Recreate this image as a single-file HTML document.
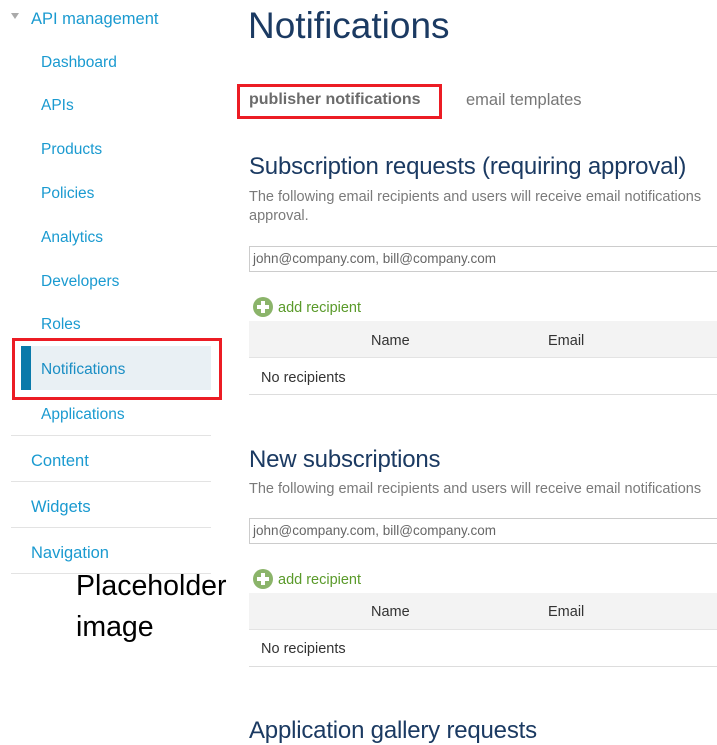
<!DOCTYPE html>
<html><head><meta charset="utf-8"><style>
body{margin:0;width:717px;height:743px;overflow:hidden;background:#fff;font-family:"Liberation Sans",sans-serif;position:relative}
.a{position:absolute;white-space:nowrap}
.nav{color:#1a9ad0;font-size:15.5px;line-height:20px}
.sep{position:absolute;left:11px;width:200px;height:1px;background:#e3e3e3}
.h2{color:#1b3a62;font-size:24px;line-height:28px;letter-spacing:-0.2px}
.desc{color:#7a7a7a;font-size:14.5px;line-height:18px}
.inp{position:absolute;left:249px;width:480px;height:26px;border:1px solid #ccc;box-sizing:border-box;color:#666;font-size:13.5px;line-height:24px;padding-left:3px}
.add{color:#5a9a2a;font-size:14.5px;line-height:18px}
.plus{position:absolute;width:20px;height:20px;border-radius:50%;background:#8bb46a}
.plus:before{content:"";position:absolute;left:4px;top:8px;width:12px;height:4px;background:#fff}
.plus:after{content:"";position:absolute;left:8px;top:4px;width:4px;height:12px;background:#fff}
.th{position:absolute;left:249px;width:468px;height:36px;background:#f3f3f3;border-bottom:1px solid #e3e3e3}
.tx{color:#333;font-size:14.5px;line-height:18px}
.line{position:absolute;left:249px;width:468px;height:1px;background:#ddd}
</style></head><body>
<div class="a" style="left:11px;top:13px;width:0;height:0;border-left:4px solid transparent;border-right:4px solid transparent;border-top:6px solid #aaa"></div>
<div class="a nav" style="left:31px;top:9px;font-size:16.5px">API management</div>
<div class="a nav" style="left:41px;top:53px">Dashboard</div>
<div class="a nav" style="left:41px;top:96px">APIs</div>
<div class="a nav" style="left:41px;top:140px">Products</div>
<div class="a nav" style="left:41px;top:184px">Policies</div>
<div class="a nav" style="left:41px;top:228px">Analytics</div>
<div class="a nav" style="left:41px;top:272px">Developers</div>
<div class="a nav" style="left:41px;top:315px">Roles</div>
<div class="a" style="left:12px;top:338px;width:210px;height:62px;border:3px solid #ec1c24;box-sizing:border-box"></div>
<div class="a" style="left:21px;top:346px;width:190px;height:44px;background:#e9f0f4"></div>
<div class="a" style="left:21px;top:346px;width:10px;height:44px;background:#0a7aaa"></div>
<div class="a nav" style="left:41px;top:360px;color:#1a8ec4">Notifications</div>
<div class="a nav" style="left:41px;top:405px">Applications</div>
<div class="sep" style="top:435px"></div>
<div class="a nav" style="left:31px;top:451px;font-size:16.5px">Content</div>
<div class="sep" style="top:481px"></div>
<div class="a nav" style="left:31px;top:497px;font-size:16.5px">Widgets</div>
<div class="sep" style="top:527px"></div>
<div class="a nav" style="left:31px;top:543px;font-size:16.5px">Navigation</div>
<div class="sep" style="top:573px"></div>
<div class="a" style="left:76px;top:569px;font-size:28.5px;line-height:34px;color:#000">Placeholder</div>
<div class="a" style="left:76px;top:610px;font-size:28.5px;line-height:34px;color:#000">image</div>

<div class="a" style="left:248px;top:3px;font-size:37px;line-height:46px;color:#1b3a62">Notifications</div>
<div class="a" style="left:237px;top:84px;width:205px;height:35px;border:3px solid #ec1c24;box-sizing:border-box"></div>
<div class="a" style="left:249px;top:90px;font-size:16px;line-height:20px;font-weight:bold;color:#6b6b6b">publisher notifications</div>
<div class="a" style="left:466px;top:90px;font-size:16.5px;line-height:20px;color:#777">email templates</div>

<div class="a h2" style="left:249px;top:153px">Subscription requests (requiring approval)</div>
<div class="a desc" style="left:249px;top:188px">The following email recipients and users will receive email notifications</div>
<div class="a desc" style="left:249px;top:207px">approval.</div>
<div class="inp" style="top:246px">john@company.com, bill@company.com</div>
<div class="plus" style="left:253px;top:297px"></div>
<div class="a add" style="left:278px;top:299px">add recipient</div>
<div class="th" style="top:321px"></div>
<div class="a tx" style="left:371px;top:332px">Name</div>
<div class="a tx" style="left:548px;top:332px">Email</div>
<div class="a tx" style="left:261px;top:369px">No recipients</div>
<div class="line" style="top:394px"></div>

<div class="a h2" style="left:249px;top:446px">New subscriptions</div>
<div class="a desc" style="left:249px;top:480px">The following email recipients and users will receive email notifications</div>
<div class="inp" style="top:518px">john@company.com, bill@company.com</div>
<div class="plus" style="left:253px;top:569px"></div>
<div class="a add" style="left:278px;top:571px">add recipient</div>
<div class="th" style="top:593px"></div>
<div class="a tx" style="left:371px;top:603px">Name</div>
<div class="a tx" style="left:548px;top:603px">Email</div>
<div class="a tx" style="left:261px;top:640px">No recipients</div>
<div class="line" style="top:666px"></div>

<div class="a h2" style="left:249px;top:717px">Application gallery requests</div>
</body></html>
